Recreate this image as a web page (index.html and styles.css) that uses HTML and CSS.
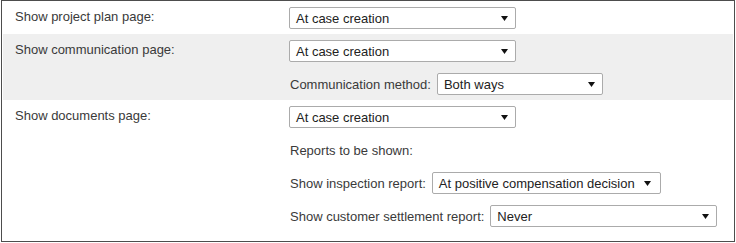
FILE: index.html
```html
<!DOCTYPE html>
<html>
<head>
<meta charset="utf-8">
<link rel="stylesheet" href="styles.css">
</head>
<body>
<div class="frame">
  <div class="row">
    <div class="label">Show project plan page:</div>
    <div class="controls">
      <div class="select wide"><span class="value">At case creation</span><svg class="arrow" width="7" height="5" viewBox="0 0 7 5"><path d="M0 0H7L3.5 5Z"/></svg></div>
    </div>
  </div>
  <div class="row shaded">
    <div class="label">Show communication page:</div>
    <div class="controls">
      <div class="select wide"><span class="value">At case creation</span><svg class="arrow" width="7" height="5" viewBox="0 0 7 5"><path d="M0 0H7L3.5 5Z"/></svg></div>
      <div class="line"><span class="sublabel">Communication method:</span><div class="select method"><span class="value">Both ways</span><svg class="arrow" width="7" height="5" viewBox="0 0 7 5"><path d="M0 0H7L3.5 5Z"/></svg></div></div>
    </div>
  </div>
  <div class="row last">
    <div class="label">Show documents page:</div>
    <div class="controls">
      <div class="select wide"><span class="value">At case creation</span><svg class="arrow" width="7" height="5" viewBox="0 0 7 5"><path d="M0 0H7L3.5 5Z"/></svg></div>
      <div class="line"><span class="sublabel">Reports to be shown:</span></div>
      <div class="line"><span class="sublabel">Show inspection report:</span><div class="select auto"><span class="value">At positive compensation decision</span><svg class="arrow" width="7" height="5" viewBox="0 0 7 5"><path d="M0 0H7L3.5 5Z"/></svg></div></div>
      <div class="line"><span class="sublabel">Show customer settlement report:</span><div class="select wide"><span class="value">Never</span><svg class="arrow" width="7" height="5" viewBox="0 0 7 5"><path d="M0 0H7L3.5 5Z"/></svg></div></div>
    </div>
  </div>
</div>
</body>
</html>
```
FILE: styles.css
```css
html, body {
  margin: 0;
  padding: 0;
  background: #ffffff;
}
body {
  font-family: "Liberation Sans", Arial, sans-serif;
  font-size: 13px;
  color: #3a3a3a;
}
.frame {
  margin-left: 1px;
  width: 734px;
  height: 242px;
  box-sizing: border-box;
  border: 1px solid #4d4d4d;
  padding: 0 1px;
  display: flex;
  flex-direction: column;
}
.row {
  display: flex;
  padding: 6px 0 5px 12px;
}
.row.shaded {
  background: #efefef;
}
.row.last {
  flex: 1;
}
.label {
  width: 274px;
  flex: none;
  line-height: 15px;
  padding-top: 2px;
}
.controls {
  display: flex;
  flex-direction: column;
  align-items: flex-start;
  gap: 11px;
}
.line {
  display: flex;
  align-items: center;
  gap: 6px;
  height: 22px;
  padding-left: 1px;
}
.select {
  box-sizing: border-box;
  height: 22px;
  display: flex;
  align-items: center;
  justify-content: space-between;
  border: 1px solid #ababab;
  border-radius: 2px;
  background: #ffffff;
  padding: 0 7px 0 6px;
  color: #222222;
}
.select.wide {
  width: 227px;
}
.select.method {
  width: 166px;
}
.select.auto {
  gap: 9px;
  padding-right: 9px;
}
.arrow {
  flex: none;
  fill: #111111;
}
```
